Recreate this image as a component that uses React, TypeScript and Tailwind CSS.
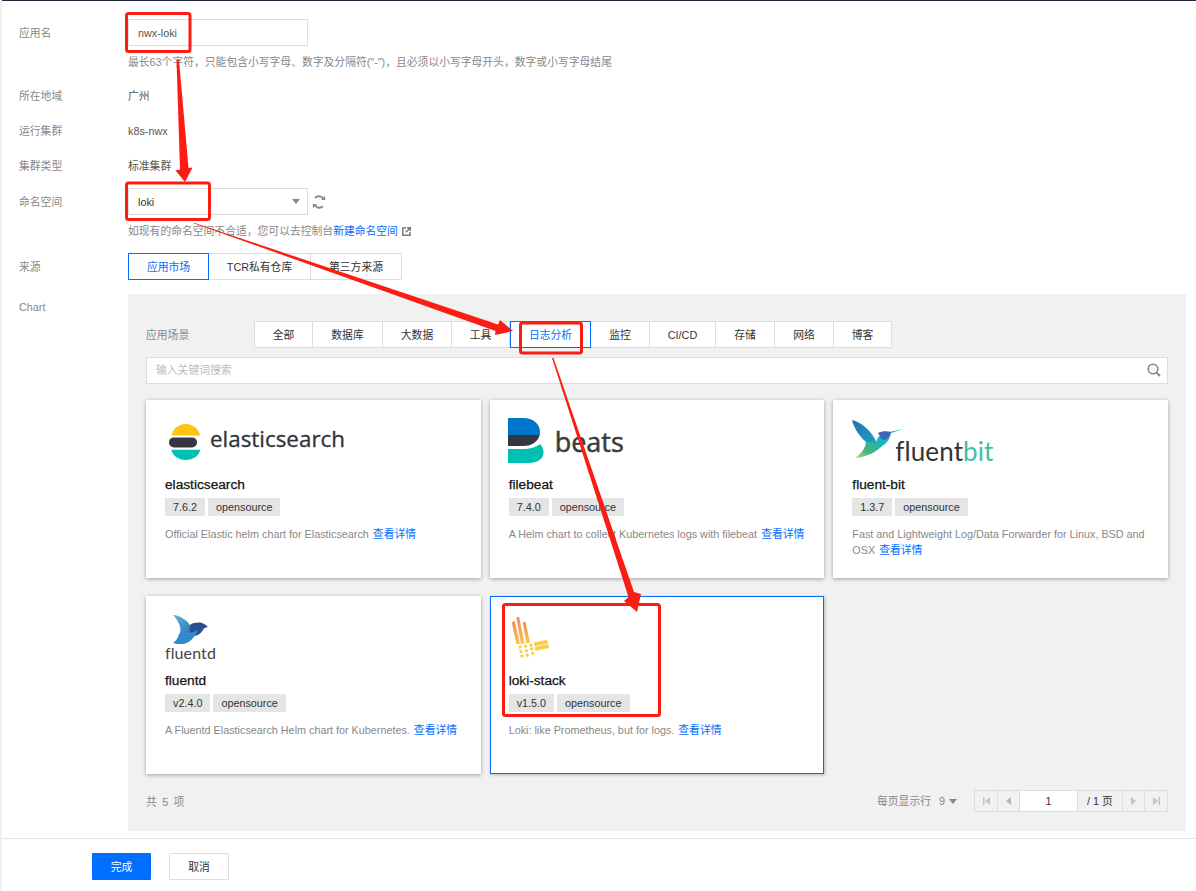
import React from "react";

function ExternalIcon() {
  return (
    <svg width="9" height="9" viewBox="0 0 9 9" className="ml-[4px]" fill="none" stroke="#777" strokeWidth="1.4">
      <path d="M4 1H.8v7.2H8V5" />
      <path d="M5 .8h3.2V4M8 1 3.800 5.200" />
    </svg>
  );
}

function RefreshIcon() {
  return (
    <svg width="14" height="14" viewBox="0 0 14 14" fill="none" stroke="#888" strokeWidth="1.9" className="ml-[4px]">
      <path d="M11.400 4.400A5 5 0 0 0 3 2.900" />
      <path d="M2.600 9.600A5 5 0 0 0 11 11.100" />
      <path d="M9 5h4.200V.8z" fill="#888" stroke="none" />
      <path d="M5 9H.8v4.200z" fill="#888" stroke="none" />
    </svg>
  );
}

function SearchIcon() {
  return (
    <svg width="14" height="14" viewBox="0 0 14 14" fill="none" stroke="#888" strokeWidth="1.6">
      <circle cx="6" cy="6" r="4.800" />
      <path d="M9.600 9.600 13 13" strokeWidth="2" />
    </svg>
  );
}

function ElasticLogo() {
  return (
    <div className="flex items-center h-[54px]">
      <svg width="34" height="38" viewBox="0 0 34 38" className="ml-[4px] block">
        <path d="M2.400 12.600C3.600 5.800 9.600 1 16.800 1c7 0 13 4.800 14.400 11.600z" fill="#fec514" />
        <rect x="0" y="14.400" width="28" height="10" rx="5" fill="#343741" />
        <path d="M2.400 26.800h28.800C30 33 24 37 16.800 37 9.600 37 3.600 33 2.400 26.800z" fill="#00bfb3" />
      </svg>
      <span className="ml-[7px] -mt-[6px] font-['Open_Sans',sans-serif] text-[22.4px] leading-[30px] font-medium text-[#2f323b] [-webkit-text-stroke:0.3px_#2f323b]">
        elasticsearch
      </span>
    </div>
  );
}

function BeatsLogo() {
  return (
    <div className="flex items-center h-[54px] -ml-[1px]">
      <svg width="36" height="46" viewBox="0 0 36 46" className="-mt-[3px] block">
        <path d="M0 0h15c10 0 17 6 17 14 0 1.200-.1 2.200-.3 3H0z" fill="#0077cc" />
        <path d="M0 17h31.700C30 23.500 24 28 15 28H0z" fill="#343741" />
        <path d="M0 31h15c7 0 13-1.500 17-5 2.500 2.500 3.500 5.500 3.500 8.500C35.500 41 29 45 21 45H0z" fill="#00bfb3" />
      </svg>
      <span className="ml-[11px] font-['Open_Sans',sans-serif] text-[27px] leading-[36px] font-medium text-[#3b3b3b] [-webkit-text-stroke:0.5px_#3b3b3b]">
        beats
      </span>
    </div>
  );
}

function FluentBitLogo() {
  return (
    <div className="relative h-[54px] w-[160px]">
      <svg width="54" height="40" viewBox="0 0 54 40" className="absolute left-0 top-[5px]">
        <defs>
          <linearGradient id="fbWing" x1="0" y1="0" x2="1" y2="1">
            <stop offset="0" stopColor="#2a6db5" />
            <stop offset="1" stopColor="#1aa6c0" />
          </linearGradient>
          <linearGradient id="fbTail" x1="1" y1="0" x2="0" y2="1">
            <stop offset="0" stopColor="#10b5b5" />
            <stop offset=".6" stopColor="#4cb57d" />
            <stop offset="1" stopColor="#b6d66a" />
          </linearGradient>
        </defs>
        <path d="M0 0C9 2 20 11 25 23L17 24C9 19 2 9 0 0z" fill="url(#fbWing)" />
        <path d="M24 24c1-7 5-11 11-11.500L51 9l-12 4c-1 5-4 12-13 15z" fill="#17b3c2" />
        <path d="M26 13c3-2 9-2.400 13-1l-1 2.500c-2 5-5 5-8 5z" fill="#3f67b5" />
        <path d="M14 22c5 0 12 0 16 4-6 6-15 11-27 12 6-4 10-9 11-16z" fill="url(#fbTail)" />
      </svg>
      <div className="absolute left-[43px] top-[18px] font-['Lato',sans-serif] text-[26px] leading-[36px] tracking-[0.1px] whitespace-nowrap">
        <span className="text-[#333]">fluent</span>
        <span className="text-[#3ebfa5]">bit</span>
      </div>
    </div>
  );
}

function FluentdLogo() {
  return (
    <div className="relative h-[54px] w-[120px]">
      <svg width="38" height="30" viewBox="0 0 38 30" className="absolute left-[7px] top-[4px]">
        <defs>
          <linearGradient id="fdWing" x1="0" y1="0" x2="1" y2="1">
            <stop offset="0" stopColor="#6bb7de" />
            <stop offset="1" stopColor="#2173b8" />
          </linearGradient>
        </defs>
        <path d="M1 0c6 0 14 5 17 10l2 8-13 2C11 14 6 5 1 0z" fill="url(#fdWing)" />
        <path d="M18 10c3-2.500 9-3 12-2 2 .5 5 3 6 4-3 .5-4 1-5 3-3 5-8 7-13 6z" fill="#2a4f93" />
        <path d="M7 19c5 0 13-1 19-4-3 7-9 14-16 14-3 0-7 0-9-1 3-2 5-5 6-9z" fill="#2f8ccc" />
      </svg>
      <div className="absolute left-0 top-[31px] font-['Lato',sans-serif] text-[16px] leading-[22px] text-[#444] tracking-[0.1px]">fluentd</div>
    </div>
  );
}

function LokiLogo() {
  return (
    <div className="h-[54px] pt-[5px]">
      <svg width="40" height="44" viewBox="0 0 44 48" className="block ml-[1px]">
        <defs>
          <linearGradient id="lk" x1="0" y1="0" x2="0" y2="1">
            <stop offset="0" stopColor="#f4885c" />
            <stop offset="1" stopColor="#fbc94a" />
          </linearGradient>
        </defs>
        <g fill="url(#lk)">
          <polygon points="2,7 5,5 11,30 7,31" />
          <polygon points="7,1 10,1 16,30 12,31" />
          <polygon points="14,7 17,6 22,29 18,30" />
        </g>
        <g fill="#f9cf4a">
          <polygon points="9,33 12,32 13,35 10,36" />
          <polygon points="15,32 18,31 19,34 16,35" />
          <polygon points="21,31 24,30 25,33 22,34" />
          <polygon points="26,29 41,26 42,30 27,33" />
          <polygon points="10,38 13,37 14,40 11,41" />
          <polygon points="16,37 19,36 20,39 17,40" />
          <polygon points="22,35 25,34 26,37 23,38" />
          <polygon points="27,34 42,31 43,35 28,38" />
          <polygon points="11,43 14,42 15,45 12,46" />
          <polygon points="17,42 20,41 21,44 18,45" />
          <polygon points="23,40 26,39 27,42 24,43" />
        </g>
      </svg>
    </div>
  );
}

type Card = {
  logo: React.ReactNode;
  name: string;
  version: string;
  desc: string;
  active?: boolean;
};

const cards: Card[] = [
  { logo: <ElasticLogo />, name: "elasticsearch", version: "7.6.2", desc: "Official Elastic helm chart for Elasticsearch" },
  { logo: <BeatsLogo />, name: "filebeat", version: "7.4.0", desc: "A Helm chart to collect Kubernetes logs with filebeat" },
  { logo: <FluentBitLogo />, name: "fluent-bit", version: "1.3.7", desc: "Fast and Lightweight Log/Data Forwarder for Linux, BSD and OSX" },
  { logo: <FluentdLogo />, name: "fluentd", version: "v2.4.0", desc: "A Fluentd Elasticsearch Helm chart for Kubernetes." },
  { logo: <LokiLogo />, name: "loki-stack", version: "v1.5.0", desc: "Loki: like Prometheus, but for logs.", active: true },
];

const tabs = [
  { t: "全部", w: "w-[59px]" },
  { t: "数据库", w: "w-[70px]" },
  { t: "大数据", w: "w-[69px]" },
  { t: "工具", w: "w-[58px]" },
  { t: "日志分析", w: "w-[81px]", active: true },
  { t: "监控", w: "w-[59px]" },
  { t: "CI/CD", w: "w-[66px]" },
  { t: "存储", w: "w-[59px]" },
  { t: "网络", w: "w-[59px]" },
  { t: "博客", w: "w-[58px]" },
];

function Row({ label, children, h = "h-[18px]" }: { label: string; children: React.ReactNode; h?: string }) {
  return (
    <div className={`flex items-center ${h}`}>
      <div className="w-[109px] shrink-0 text-[#888]">{label}</div>
      {children}
    </div>
  );
}

function PagerCell({ children, w }: { children: React.ReactNode; w: string }) {
  return <div className={`${w} h-full flex items-center justify-center border-r border-[#ddd] last:border-r-0`}>{children}</div>;
}

function Overlay() {
  const red = "#fb1d14";
  return (
    <svg width="1196" height="891" viewBox="0 0 1196 891" className="absolute left-0 top-0 pointer-events-none">
      <g fill="none" stroke={red} strokeWidth="3">
        <rect x="126.500" y="13.500" width="63.500" height="38" rx="2" />
        <rect x="126.500" y="183" width="83" height="36.500" rx="2" />
        <rect x="520.500" y="323" width="61" height="30" rx="2" />
        <rect x="503.500" y="604.500" width="156" height="111" rx="2" />
      </g>
      <g fill={red}>
        <polygon points="176.500,60 179,60 188.500,168 192.500,167.500 185,182 175.500,170.500 180,169.500" />
        <polygon points="193,223 195,223 498,324.500 500,320 513,331 495,335 495.500,331" />
        <polygon points="552,358 553.500,358 634,592 641,594 637,612 624,601 628.500,597" />
      </g>
    </svg>
  );
}

export default function App() {
  return (
    <div className="relative w-[1196px] h-[891px] overflow-hidden bg-white border-l-2 border-[#f0f0f0] text-[10.8px] leading-[18px] text-[#333] font-['Liberation_Sans','Noto_Sans_CJK_SC',sans-serif]">
      <div className="h-px -ml-[2px] bg-[#1e2a3b]" />
      <div className="pl-[17px] pr-[10px] pt-[18px]">
        <Row label="应用名" h="h-[27px]">
          <div className="w-[180px] h-[27px] border border-[#ddd] flex items-center pl-[9px] text-[#555]">nwx-loki</div>
        </Row>
        <div className="mt-[7px] pl-[109px] text-[#888]">最长63个字符，只能包含小写字母、数字及分隔符("-")，且必须以小写字母开头，数字或小写字母结尾</div>
        <div className="mt-[16px]"><Row label="所在地域"><span className="text-[#555]">广州</span></Row></div>
        <div className="mt-[17px]"><Row label="运行集群"><span className="text-[#555]">k8s-nwx</span></Row></div>
        <div className="mt-[17px]"><Row label="集群类型"><span className="text-[#555]">标准集群</span></Row></div>
        <div className="mt-[13px]">
          <Row label="命名空间" h="h-[27px]">
            <div className="w-[180px] h-[27px] border border-[#ddd] flex items-center justify-between pl-[9px] pr-[7px]">
              <span>loki</span>
              <span className="w-0 h-0 border-x-[4px] border-x-transparent border-t-[5px] border-t-[#888]" />
            </div>
            <RefreshIcon />
          </Row>
        </div>
        <div className="mt-[7px] pl-[109px] flex items-center text-[#888]">
          如现有的命名空间不合适，您可以去控制台<span className="text-[#006eff]">新建命名空间</span>
          <ExternalIcon />
        </div>
        <div className="mt-[13px]">
          <Row label="来源" h="h-[27px]">
            <div className="flex h-[27px] text-[#333]">
              <div className="w-[81px] border border-[#006eff] text-[#006eff] flex items-center justify-center">应用市场</div>
              <div className="w-[102px] border-y border-r border-[#ddd] flex items-center justify-center">TCR私有仓库</div>
              <div className="w-[91px] border-y border-r border-[#ddd] flex items-center justify-center">第三方来源</div>
            </div>
          </Row>
        </div>
        <div className="mt-[14px] flex">
          <div className="w-[109px] shrink-0 pt-[4px] text-[#888]">Chart</div>
          <div className="w-[1058px] h-[537px] bg-[#f1f1f1] pl-[18px] pr-[18px] pt-[27px]">
            <div className="flex items-center h-[27px]">
              <div className="w-[108px] shrink-0 text-[#888]">应用场景</div>
              <div className="flex h-[27px]">
                {tabs.map((t, i) => (
                  <div
                    key={t.t}
                    className={`${t.w} h-full bg-white flex items-center justify-center ${
                      t.active
                        ? "border border-[#006eff] text-[#006eff]"
                        : i === 0
                          ? "border border-[#ddd]"
                          : "border-y border-r border-[#ddd]"
                    }`}
                  >
                    {t.t}
                  </div>
                ))}
              </div>
            </div>
            <div className="mt-[9px] h-[27px] bg-white border border-[#ddd] flex items-center justify-between pl-[9px] pr-[6px] pb-[1px] text-[#bbb]">
              <span>输入关键词搜索</span>
              <SearchIcon />
            </div>
            <div className="mt-[16px] grid grid-cols-3 gap-x-[9px] gap-y-[18px]">
              {cards.map((c) => (
                <div
                  key={c.name}
                  className={`h-[178px] bg-white pr-[18px] ${
                    c.active
                      ? "pt-[14px] pl-[18px] border border-[#006eff] shadow-[1px_1px_3px_rgba(0,0,0,0.25)]"
                      : "pt-[15px] pl-[19px] shadow-[0_1px_4px_rgba(0,0,0,0.35)]"
                  }`}
                >
                  {c.logo}
                  <div className="mt-[7px] text-[13.7px] leading-[18px] text-[#111] [-webkit-text-stroke:0.25px_#111]">{c.name}</div>
                  <div className="mt-[4px] flex gap-[3px]">
                    <span className="h-[18px] px-[8px] bg-[#e5e5e5] flex items-center">{c.version}</span>
                    <span className="h-[18px] px-[8px] bg-[#e5e5e5] flex items-center">opensource</span>
                  </div>
                  <div className="mt-[10px] leading-[16px] text-[#888]">
                    {c.desc} <span className="ml-[1px] text-[#006eff]">查看详情</span>
                  </div>
                </div>
              ))}
            </div>
            <div className="mt-[16px] h-[22px] flex items-center justify-between text-[#888]">
              <span className="tracking-[1.2px] pt-[1px]">共 5 项</span>
              <div className="flex items-center h-full">
                <span>每页显示行</span>
                <span className="ml-[8px]">9</span>
                <span className="ml-[4px] w-0 h-0 border-x-[4px] border-x-transparent border-t-[5px] border-t-[#888]" />
                <div className="ml-[17px] h-full flex border border-[#ddd]">
                  <PagerCell w="w-[23px]"><svg width="7" height="8" viewBox="0 0 7 8" fill="#c4c4c4"><path d="M0 0h1.500v8H0zM7 0v8L2 4z" /></svg></PagerCell>
                  <PagerCell w="w-[22px]"><svg width="5" height="8" viewBox="0 0 5 8" fill="#b5b5b5"><path d="M5 0v8L0 4z" /></svg></PagerCell>
                  <PagerCell w="w-[58px]"><span className="block w-full h-full bg-white text-center text-[#333] leading-[20px]">1</span></PagerCell>
                  <PagerCell w="w-[45px]"><span className="text-[#333]">/ 1 页</span></PagerCell>
                  <PagerCell w="w-[22px]"><svg width="5" height="8" viewBox="0 0 5 8" fill="#c4c4c4"><path d="M0 0v8l5-4z" /></svg></PagerCell>
                  <PagerCell w="w-[22px]"><svg width="7" height="8" viewBox="0 0 7 8" fill="#c4c4c4"><path d="M0 0v8l5-4zM5.500 0H7v8H5.500z" /></svg></PagerCell>
                </div>
              </div>
            </div>
          </div>
        </div>
      </div>
      <div className="mt-[7px] -ml-[2px] border-t border-[#dde3e3] pt-[14px] pl-[92px] flex gap-[18px]">
        <div className="w-[59px] h-[27px] bg-[#006eff] rounded-[1px] text-white flex items-center justify-center">完成</div>
        <div className="w-[60px] h-[27px] border border-[#ddd] rounded-[1px] flex items-center justify-center">取消</div>
      </div>
      <div className="absolute -left-[2px] top-0">
        <Overlay />
      </div>
    </div>
  );
}
